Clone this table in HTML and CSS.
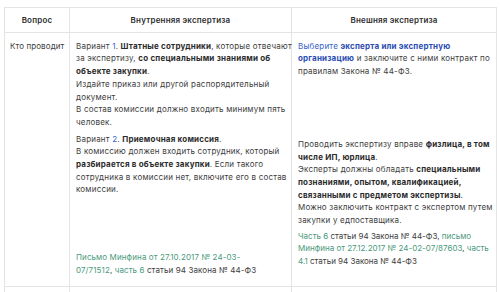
FILE: index.html
```html
<!DOCTYPE html>
<html lang="ru">
<head>
<meta charset="utf-8">
<link rel="stylesheet" href="styles.css">
</head>
<body>
<table class="tbl">
  <colgroup>
    <col class="c1"><col class="c2"><col class="c3">
  </colgroup>
  <thead>
    <tr>
      <th>Вопрос</th>
      <th>Внутренняя экспертиза</th>
      <th>Внешняя экспертиза</th>
    </tr>
  </thead>
  <tbody>
    <tr class="main">
      <td class="q">Кто проводит</td>
      <td>
        <div class="cell">
          <p>Вариант <a class="blue">1</a>. <b>Штатные сотрудники</b>, которые отвечают<br>за экспертизу, <b>со специальными знаниями об<br>объекте закупки</b>.<br>Издайте приказ или другой распорядительный<br>документ.<br>В состав комиссии должно входить минимум пять<br>человек.</p>
          <p class="v2">Вариант <a class="blue">2</a>. <b>Приемочная комиссия</b>.<br>В комиссию должен входить сотрудник, который<br><b>разбирается в объекте закупки</b>. Если такого<br>сотрудника в комиссии нет, включите его в состав<br>комиссии.</p>
          <p class="refs"><a class="green">Письмо Минфина от 27.10.2017 № 24-03-<br>07/71512</a>, <a class="green">часть 6</a> статьи 94 Закона № 44-ФЗ</p>
        </div>
      </td>
      <td>
        <div class="cell">
          <p><a class="blue">Выберите <b>эксперта или экспертную<br>организацию</b></a> и заключите с ними контракт по<br>правилам Закона № 44-ФЗ.</p>
          <p class="who">Проводить экспертизу вправе <b>физлица, в том<br>числе ИП, юрлица</b>.<br>Эксперты должны обладать <b>специальными<br>познаниями, опытом, квалификацией,<br>связанными с предметом экспертизы</b>.<br>Можно заключить контракт с экспертом путем<br>закупки у едпоставщика.</p>
          <p class="refs3"><a class="green">Часть 6</a> статьи 94 Закона № 44-ФЗ, <a class="green">письмо<br>Минфина от 27.12.2017 № 24-02-07/87603</a>, <a class="green">часть<br>4.1</a> статьи 94 Закона № 44-ФЗ</p>
        </div>
      </td>
    </tr>
    <tr class="next">
      <td></td><td></td><td></td>
    </tr>
  </tbody>
</table>
</body>
</html>
```

FILE: styles.css
```css
html, body {
  margin: 0;
  padding: 0;
  background: #ffffff;
  overflow: hidden;
  height: 292px;
}
body {
  padding: 7px 5px 0 4px;
  box-sizing: border-box;
  font-family: Inter, "Noto Sans", sans-serif;
  font-size: 8px;
  letter-spacing: 0.2px;
  line-height: 12.7px;
  color: #3d3d3d;
}
.tbl {
  border-collapse: collapse;
  table-layout: fixed;
  width: 492px;
}
.c1 { width: 65px; }
.c2 { width: 222px; }
.c3 { width: 205px; }
.tbl th, .tbl td {
  border: 1px solid #e4e4e4;
  vertical-align: top;
  text-align: left;
  padding: 7px 6px 10px 6px;
}
.tbl th {
  text-align: center;
  font-weight: 600;
  color: #2e2e2e;
  padding: 5.5px 6px;
}
.tbl td.q {
  padding-left: 5px;
  padding-right: 2px;
  letter-spacing: 0.1px;
}
.cell {
  display: flex;
  flex-direction: column;
  height: 236.6px;
}
p { margin: 0; white-space: nowrap; }
b { font-weight: 700; color: #2b2b2b; }
.blue { color: #3562cc; }
.blue b { color: #2a4db4; }
.green { color: #4c9a7c; }
.v2 { margin-top: 4px; }
.refs { margin-top: auto; letter-spacing: 0.1px; }
.who { margin-top: 60px; }
.refs3 { margin-top: 3px; letter-spacing: 0; }
.next td { height: 20px; padding: 0; }
```
